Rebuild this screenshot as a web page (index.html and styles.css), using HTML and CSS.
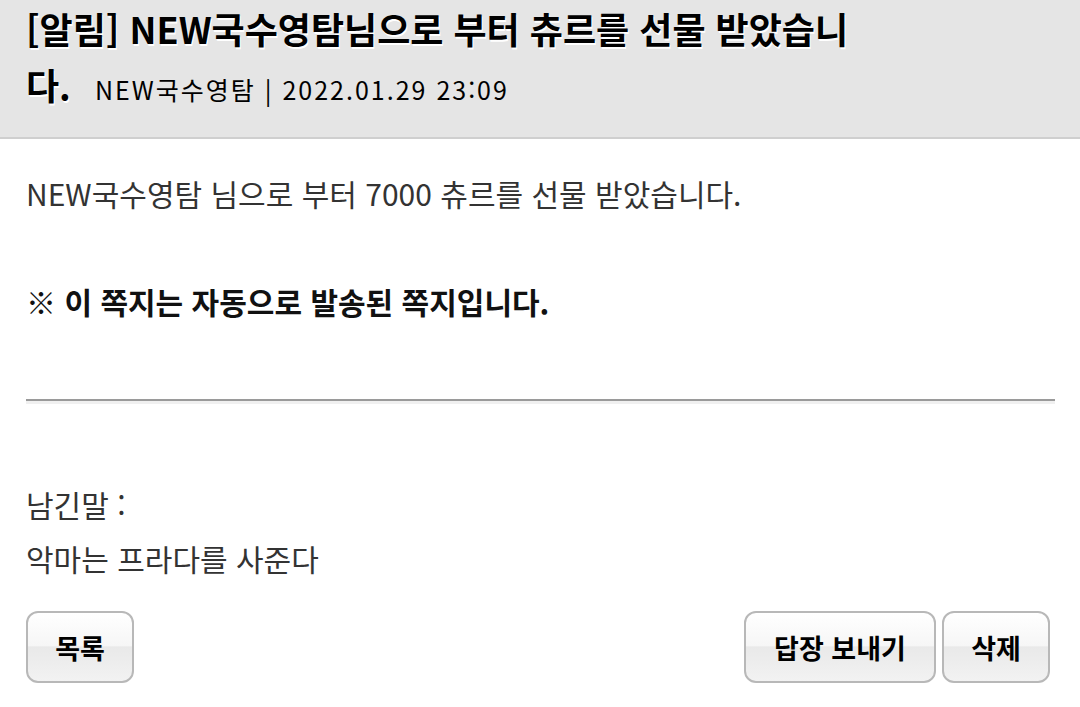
FILE: index.html
```html
<!DOCTYPE html>
<html lang="ko">
<head>
<meta charset="utf-8">
<title>쪽지</title>
<link rel="stylesheet" href="styles.css">
</head>
<body>
<div class="header">
  <h1 class="title">[알림] NEW국수영탐님으로 부터 츄르를 선물 받았습니다. <span class="meta">NEW국수영탐 | 2022.01.29 23:09</span></h1>
</div>
<div class="content">
  <p class="msg">NEW국수영탐 님으로 부터 7000 츄르를 선물 받았습니다.</p>
  <p class="notice">※ 이 쪽지는 자동으로 발송된 쪽지입니다.</p>
  <div class="divider"></div>
  <p class="memo-label">남긴말 :</p>
  <p class="memo">악마는 프라다를 사준다</p>
  <div class="actions">
    <button class="btn btn-list">목록</button>
    <div class="right">
      <button class="btn btn-reply">답장 보내기</button>
      <button class="btn btn-del">삭제</button>
    </div>
  </div>
</div>
</body>
</html>
```
FILE: styles.css
```css
html, body {
  margin: 0;
  padding: 0;
  background: #ffffff;
  font-family: "Noto Sans CJK KR", "Noto Sans", sans-serif;
}
.header {
  background: #e5e5e5;
  border-bottom: 2px solid #cfcfcf;
  height: 139px;
  box-sizing: border-box;
  padding: 0 26px 0 26px;
}
.title {
  margin: 0;
  max-width: 850px;
  font-size: 36px;
  font-weight: 700;
  line-height: 56px;
  color: #000;
  text-shadow: 1px 2px 0 #ffffff;
}
.meta {
  white-space: nowrap;
  font-size: 25px;
  font-weight: 400;
  letter-spacing: 2px;
  margin-left: 14px;
  color: #000;
  text-shadow: none;
}
.content {
  padding: 0 25px 0 26px;
}
.msg {
  margin: 34px 0 0 0;
  font-size: 30px;
  line-height: 40px;
  color: #333;
}
.notice {
  margin: 68px 0 0 0;
  font-size: 30px;
  line-height: 40px;
  font-weight: 700;
  color: #111;
}
.divider {
  margin-top: 78px;
  border-top: 2px solid #9a9a9a;
  height: 3px;
  background: #f0f0f0;
}
.memo-label {
  margin: 80px 0 0 0;
  font-size: 30px;
  line-height: 40px;
  color: #333;
}
.memo {
  margin: 14px 0 0 0;
  font-size: 30px;
  line-height: 40px;
  color: #333;
}
.actions {
  display: flex;
  justify-content: space-between;
  margin: 33px 5px 0 0;
}
.right {
  display: flex;
  gap: 6px;
}
.btn {
  height: 72px;
  border: 2px solid #b8b8b8;
  border-radius: 12px;
  background: linear-gradient(to bottom, #ffffff 0%, #f6f6f6 48%, #e9e9e9 50%, #f2f2f2 100%);
  font-family: "Noto Sans CJK KR", "Noto Sans", sans-serif;
  font-size: 27px;
  font-weight: 700;
  color: #000;
  padding: 0;
  cursor: pointer;
}
.btn-list { width: 108px; }
.btn-reply { width: 192px; }
.btn-del { width: 108px; }
```
